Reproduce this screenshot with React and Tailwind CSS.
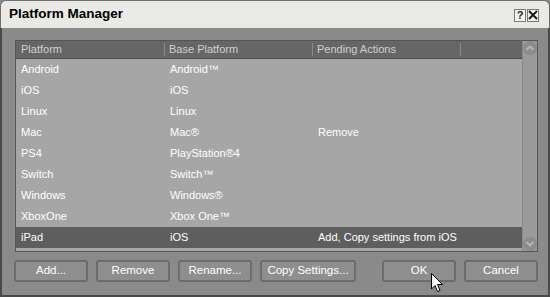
import React from 'react';

const rows = [
  ['Android', 'Android™', ''],
  ['iOS', 'iOS', ''],
  ['Linux', 'Linux', ''],
  ['Mac', 'Mac®', 'Remove'],
  ['PS4', 'PlayStation®4', ''],
  ['Switch', 'Switch™', ''],
  ['Windows', 'Windows®', ''],
  ['XboxOne', 'Xbox One™', ''],
  ['iPad', 'iOS', 'Add, Copy settings from iOS'],
];

function Btn({ label, w }) {
  return (
    <button className={`${w} h-[22px] rounded-[3px] border-2 border-[#6c6c6c] bg-[#8e8e8e] text-[11.5px] text-white leading-none`}>
      {label}
    </button>
  );
}

function Cursor() {
  return (
    <svg className="absolute left-[431px] top-[273px]" width="13" height="20" viewBox="0 0 13 20">
      <path d="M0.5 0.5 L0.5 16 L4 12.5 L6.5 18.5 L9 17.5 L6.5 11.5 L11.5 11.5 Z" fill="#fff" stroke="#000" strokeWidth="1" />
    </svg>
  );
}

export default function App() {
  return (
    <div className="relative w-[550px] h-[297px] flex flex-col bg-[#8a8a8a]" style={{ fontFamily: '"Liberation Sans", Arial, sans-serif' }}>
      {/* title bar */}
      <div className="h-[28px] flex items-center justify-between pl-[8px] pr-[10px] bg-[#e9e9e5] rounded-t-[6px] border border-b-0 border-[#6e6e6e]">
        <span className="text-[13.5px] font-bold text-black">Platform Manager</span>
        <div className="flex gap-[1px] mt-[1px]">
          <div className="w-[12px] h-[13px] border border-[#7a7a7a] bg-[#f4f4f2] flex items-center justify-center text-[11px] font-bold leading-none text-[#222]">?</div>
          <div className="w-[12px] h-[13px] border border-[#7a7a7a] bg-[#f4f4f2] flex items-center justify-center">
            <svg width="10" height="10" viewBox="0 0 10 10"><path d="M1 1 L9 9 M9 1 L1 9" stroke="#111" strokeWidth="1.8" /></svg>
          </div>
        </div>
      </div>

      {/* body */}
      <div className="flex-1 flex flex-col border-x-2 border-b-2 border-[#4a4a4a] bg-[#8a8a8a] pl-[13px] pr-[10px] pt-[12px]">
        <div className="h-[212px] flex border border-[#555] bg-[#a6a6a6]">
          <div className="flex-1 flex flex-col">
            <div className="h-[18px] flex items-center bg-[#666] border-b border-[#4c4c4c] text-[11px] text-[#cfcfcf]">
              <div className="w-[149px] pl-[5px] border-r border-[#8a8a8a] h-[13px] leading-[13px]">Platform</div>
              <div className="w-[148px] pl-[4px] border-r border-[#8a8a8a] h-[13px] leading-[13px]">Base Platform</div>
              <div className="w-[148px] pl-[4px] border-r border-[#8a8a8a] h-[13px] leading-[13px]">Pending Actions</div>
              <div className="flex-1" />
            </div>
            {rows.map(([a, b, c], i) => (
              <div key={a} className={`h-[21px] flex items-center text-[11px] text-white whitespace-nowrap ${i === rows.length - 1 ? 'bg-[#5e5e5e]' : ''}`}>
                <div className="w-[149px] shrink-0 pl-[5px]">{a}</div>
                <div className="w-[148px] shrink-0 pl-[5px]">{b}</div>
                <div className="flex-1 pl-[5px]">{c}</div>
              </div>
            ))}
          </div>
          {/* scrollbar */}
          <div className="w-[15px] flex flex-col justify-between bg-[#9a9a9a] border-l border-[#8a8a8a]">
            <div className="w-[14px] h-[14px] rounded-full bg-[#8c8c8c] flex items-center justify-center">
              <svg width="10" height="8" viewBox="0 0 10 8"><path d="M1.5 6 L5 2.5 L8.5 6" stroke="#b4b4b4" strokeWidth="2" fill="none" /></svg>
            </div>
            <div className="w-[14px] h-[14px] rounded-full bg-[#8c8c8c] flex items-center justify-center">
              <svg width="10" height="8" viewBox="0 0 10 8"><path d="M1.5 2 L5 5.5 L8.5 2" stroke="#b4b4b4" strokeWidth="2" fill="none" /></svg>
            </div>
          </div>
        </div>

        <div className="flex items-center mt-[8px] -ml-[1px]">
          <div className="flex gap-[8px]">
            <Btn label="Add..." w="w-[74px]" />
            <Btn label="Remove" w="w-[74px]" />
            <Btn label="Rename..." w="w-[74px]" />
            <Btn label="Copy Settings..." w="w-[96px]" />
          </div>
          <div className="flex gap-[8px] ml-auto">
            <Btn label="OK" w="w-[74px]" />
            <Btn label="Cancel" w="w-[74px]" />
          </div>
        </div>
      </div>
      <Cursor />
    </div>
  );
}
